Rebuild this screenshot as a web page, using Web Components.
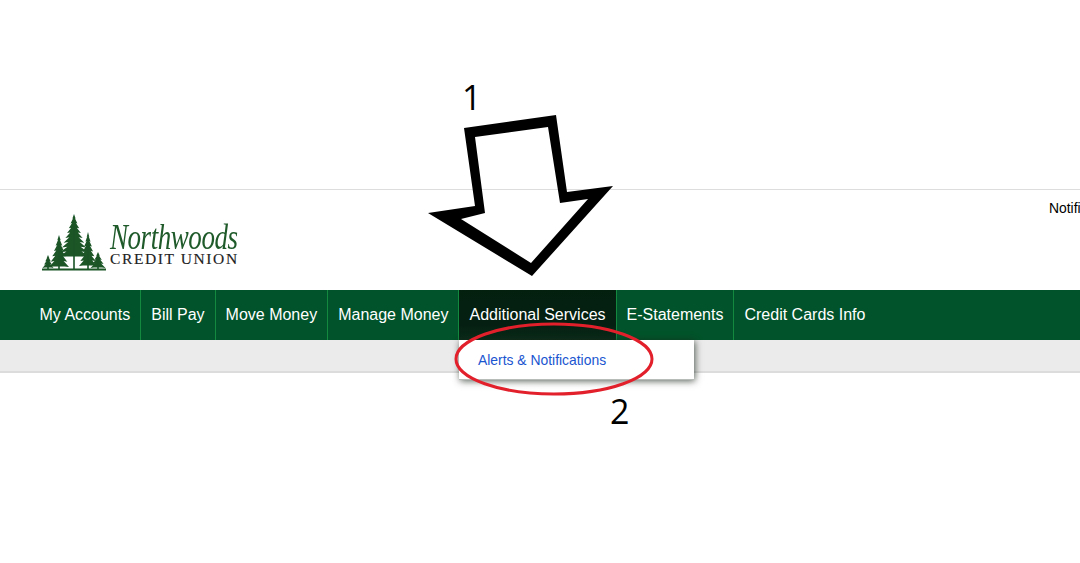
<!DOCTYPE html>
<html>
<head>
<meta charset="utf-8">
<title>Northwoods Credit Union</title>
<style>
html, body { margin: 0; height: 100%; overflow: hidden; background: #fff; }
body { font-family: "Liberation Sans", Arial, sans-serif; }
</style>
</head>
<body>
<nw-page>
  <nw-header></nw-header>
  <nw-nav>
    <nw-item>My Accounts</nw-item>
    <nw-item>Bill Pay</nw-item>
    <nw-item>Move Money</nw-item>
    <nw-item>Manage Money</nw-item>
    <nw-item active>Additional Services
      <nw-menu slot="menu">Alerts &amp; Notifications</nw-menu>
    </nw-item>
    <nw-item>E-Statements</nw-item>
    <nw-item last>Credit Cards Info</nw-item>
  </nw-nav>
  <nw-subbar></nw-subbar>
</nw-page>
<nw-marks></nw-marks>

<script>
class NwPage extends HTMLElement {
    constructor() {
        super()
        this.attachShadow({mode: 'open'})
    }
    connectedCallback() {
        this.shadowRoot.innerHTML = `<style>
        :host { display: block; padding-top: 189px; }
        </style><slot></slot>`
    }
}

class NwLogo extends HTMLElement {
    constructor() {
        super()
        this.attachShadow({mode: 'open'})
    }
    // one fir tree: stacked jagged tiers, narrowing to the tip
    tree(x, top, bottom, w, foot) {
        const h = bottom - top
        const tiers = Math.max(4, Math.round(h / 5))
        let left = '', right = ''
        for (let i = 1; i <= tiers; i++) {
            const y = top + h * i / tiers
            const half = w * (i / tiers)
            right += `L${(x + half).toFixed(1)} ${y.toFixed(1)} L${(x + half * 0.55).toFixed(1)} ${(y - 0.6).toFixed(1)} `
            left = `L${(x - half * 0.55).toFixed(1)} ${(y - 0.6).toFixed(1)} L${(x - half).toFixed(1)} ${y.toFixed(1)} ` + left
        }
        return `<path d="M${x} ${top} ${right}${left}Z"/>
        <rect x="${x - 0.8}" y="${top + h * 0.3}" width="1.6" height="${foot - top - h * 0.3}"/>`
    }
    connectedCallback() {
        // x, top, foliage bottom, half width, trunk foot
        const trees = [[9, 45, 58, 5.5, 60], [20, 25, 57, 10, 60], [35, 4, 47, 15.5, 60], [49, 22, 56, 9, 60], [59, 42, 58, 7.5, 60]]
        this.shadowRoot.innerHTML = `<style>
        :host { display: flex; flex: none; width: 199px; height: 62px; }
        svg { flex: none; width: 71px; height: 62px; }
        .name { padding-top: 13px; color: #1f5a2a; }
        .top {
            font: italic 36px/28px "Liberation Serif", serif;
            letter-spacing: -0.6px;
            white-space: nowrap;
            transform: scaleX(.75);
            transform-origin: left;
        }
        .sub {
            margin-top: 1px;
            font: 15.5px/14px "Liberation Serif", serif;
            letter-spacing: 1.6px;
            color: #222;
            white-space: nowrap;
            -webkit-text-stroke: .15px #222;
        }
        </style>
        <svg viewBox="0 0 71 62" fill="#1b5426">
          <defs><filter id="soft"><feGaussianBlur stdDeviation=".3"/></filter></defs>
          <g filter="url(#soft)">
            ${trees.map(t => this.tree(...t)).join('')}
            <rect x="3" y="58.5" width="64" height="2"/>
          </g>
        </svg>
        <div class="name">
          <div class="top">Northwoods</div>
          <div class="sub">CREDIT UNION</div>
        </div>`
    }
}

class NwHeader extends HTMLElement {
    constructor() {
        super()
        this.attachShadow({mode: 'open'})
    }
    connectedCallback() {
        this.shadowRoot.innerHTML = `<style>
        :host {
            display: flex;
            height: 101px;
            border-top: 1px solid #ddd;
            padding-left: 39px;
            box-sizing: border-box;
            overflow: hidden;
            font: 13.9px/16px "Liberation Sans", sans-serif;
            color: #000;
        }
        nw-logo { margin-top: 20px; }
        .notice { flex: none; margin: 10px 0 0 811px; white-space: nowrap; }
        </style>
        <nw-logo></nw-logo>
        <div class="notice">Notifications</div>`
    }
}

class NwNav extends HTMLElement {
    constructor() {
        super()
        this.attachShadow({mode: 'open'})
    }
    connectedCallback() {
        this.shadowRoot.innerHTML = `<style>
        :host {
            display: flex;
            height: 50px;
            padding-left: 29.5px;
            background: #00532a;
            position: relative;
            z-index: 1;
        }
        </style><slot></slot>`
    }
}

class NwItem extends HTMLElement {
    constructor() {
        super()
        this.attachShadow({mode: 'open'})
    }
    connectedCallback() {
        this.shadowRoot.innerHTML = `<style>
        :host {
            display: flex;
            align-items: center;
            position: relative;
            padding: 0 10px 0 10px;
            border-right: 1px solid #13893f;
            font: 16px/20px "Liberation Sans", sans-serif;
            color: #fff;
            white-space: nowrap;
        }
        :host([last]) { border-right: 0; }
        :host([active]) {
            background: linear-gradient(#03200f, #052012 70%, #0a2a18);
        }
        </style><slot></slot><slot name="menu"></slot>`
    }
}

class NwMenu extends HTMLElement {
    constructor() {
        super()
        this.attachShadow({mode: 'open'})
    }
    connectedCallback() {
        this.shadowRoot.innerHTML = `<style>
        :host {
            display: block;
            position: absolute;
            left: 0;
            top: 50px;
            width: 235px;
            height: 40px;
            box-sizing: border-box;
            padding: 12px 0 0 18.5px;
            background: #fff;
            border-bottom: 1px solid #b8bcb8;
            box-shadow: 1px 1px 7px rgba(30, 40, 30, .75);
            font: 13.9px/16px "Liberation Sans", sans-serif;
            color: #1a55d0;
        }
        </style><slot></slot>`
    }
}

class NwSubbar extends HTMLElement {
    constructor() {
        super()
        this.attachShadow({mode: 'open'})
    }
    connectedCallback() {
        this.shadowRoot.innerHTML = `<style>
        :host {
            display: block;
            height: 31px;
            background: #ebebeb;
            border-bottom: 2px solid #dcdcdc;
        }
        </style>`
    }
}

// the hand drawn arrow, ellipse and numbers lying over the page
class NwMarks extends HTMLElement {
    constructor() {
        super()
        this.attachShadow({mode: 'open'})
    }
    connectedCallback() {
        this.shadowRoot.innerHTML = `<style>
        :host { position: absolute; inset: 0; display: block; z-index: 5; pointer-events: none; }
        svg { position: absolute; left: 0; top: 0; }
        span {
            position: absolute;
            font: 34px/40px "Open Sans", sans-serif;
            color: #000;
        }
        .one { left: 462px; top: 77px; }
        .two { left: 610px; top: 391px; }
        </style>
        <svg width="1080" height="563" viewBox="0 0 1080 563">
          <path fill-rule="evenodd" fill="#000" d="M464 128 L556 115 L567 192 L613 186 L532 276 L428 213 L475 206 Z
            M475 137 L548 127 L560 203 L588 199 L531 263 L461 219 L485 213 Z"/>
          <ellipse cx="554" cy="359" rx="98" ry="35" fill="none" stroke="#e2202c" stroke-width="3"/>
        </svg>
        <span class="one">1</span>
        <span class="two">2</span>`
    }
}

customElements.define('nw-page', NwPage)
customElements.define('nw-logo', NwLogo)
customElements.define('nw-header', NwHeader)
customElements.define('nw-nav', NwNav)
customElements.define('nw-item', NwItem)
customElements.define('nw-menu', NwMenu)
customElements.define('nw-subbar', NwSubbar)
customElements.define('nw-marks', NwMarks)
</script>
</body>
</html>
